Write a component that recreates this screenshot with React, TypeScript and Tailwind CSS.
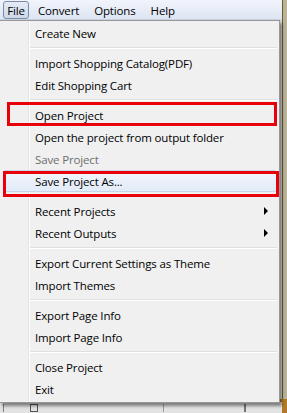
import React from "react";

type Item =
  | { kind: "item"; label: string; disabled?: boolean; sub?: boolean; hover?: boolean }
  | { kind: "sep" };

const items: Item[] = [
  { kind: "item", label: "Create New" },
  { kind: "sep" },
  { kind: "item", label: "Import Shopping Catalog(PDF)" },
  { kind: "item", label: "Edit Shopping Cart" },
  { kind: "sep" },
  { kind: "item", label: "Open Project" },
  { kind: "item", label: "Open the project from output folder" },
  { kind: "item", label: "Save Project", disabled: true },
  { kind: "item", label: "Save Project As...", hover: true },
  { kind: "sep" },
  { kind: "item", label: "Recent Projects", sub: true },
  { kind: "item", label: "Recent Outputs", sub: true },
  { kind: "sep" },
  { kind: "item", label: "Export Current Settings as Theme" },
  { kind: "item", label: "Import Themes" },
  { kind: "sep" },
  { kind: "item", label: "Export Page Info" },
  { kind: "item", label: "Import Page Info" },
  { kind: "sep" },
  { kind: "item", label: "Close Project" },
  { kind: "item", label: "Exit" },
];

export default function App() {
  return (
    <div
      className="relative w-[287px] h-[413px] overflow-hidden bg-[#d9d9d9] text-[11.5px] tracking-[-0.15px] text-black"
      style={{ fontFamily: '"Open Sans", "Noto Sans", sans-serif' }}
    >
      {/* window edge on the right */}
      <div className="absolute top-0 right-0 w-[5px] h-full bg-[#b9b39a]" />
      <div className="absolute top-0 right-[4px] w-[1px] h-full bg-[#6a5a2c]" />
      <div className="absolute bottom-0 right-0 w-[10px] h-[14px] bg-[#b07a2a]" />

      {/* menu bar */}
      <div className="flex items-center h-[20px] w-[282px] bg-gradient-to-b from-[#f1f4fb] to-[#dde5f3] border-b border-[#c9d3e3]">
        <div className="ml-[3px] h-[18px] w-[26px] flex items-center justify-center rounded-[3px] border border-[#7b8ca8] bg-gradient-to-b from-[#e6ecf6] to-[#cdd7e8]">
          <span className="translate-y-[0.5px]">File</span>
        </div>
        <div className="ml-[9px] translate-y-[0.5px]">Convert</div>
        <div className="ml-[15px] translate-y-[0.5px]">Options</div>
        <div className="ml-[15px] translate-y-[0.5px]">Help</div>
      </div>

      {/* bottom window contents peeking */}
      <div className="absolute left-0 top-[402px] w-[282px] h-[11px] bg-[#e3e3e3] flex items-center">
        <div className="ml-[3px] w-[1px] h-[8px] bg-[#808080]" />
        <div className="ml-[26px] w-[8px] h-[8px] border border-[#555]" />
        <div className="ml-[125px] w-[1px] h-[8px] bg-[#9a9a9a]" />
        <div className="ml-[80px] w-[2px] h-[8px] bg-[#777]" />
      </div>

      {/* dropdown */}
      <div className="absolute left-0 top-[20px] w-[280px] h-[383px] bg-[#f0f0f0] border border-[#979797] border-l-0 shadow-[2px_3px_3px_rgba(0,0,0,0.45)] pt-[1px]">
        {/* gutter */}
        <div className="absolute left-[28px] top-[1px] bottom-[1px] w-[1px] bg-[#e2e3e3]" />
        <div className="absolute left-[29px] top-[1px] bottom-[1px] w-[1px] bg-white" />
        <div className="relative flex flex-col">
          {items.map((it, i) =>
            it.kind === "sep" ? (
              <div key={i} className="h-[8px] flex flex-col justify-center pl-[30px] pr-[2px]">
                <div className="h-[1px] bg-[#e0e0e0]" />
                <div className="h-[1px] bg-white" />
              </div>
            ) : (
              <div key={i} className="relative h-[22px] flex items-center">
                {it.hover && (
                  <div className="absolute left-[3px] right-[2px] top-0 bottom-0 rounded-[3px] border border-[#c5d6ec] bg-gradient-to-b from-[#f2f6fc] to-[#e2ebf8]" />
                )}
                <span
                  className={
                    "relative pl-[35px] whitespace-nowrap translate-y-[1px] " +
                    (it.disabled ? "text-[#6d6d6d]" : "text-black")
                  }
                >
                  {it.label}
                </span>
                {it.sub && (
                  <svg className="absolute left-[264px] top-[7px]" width="4" height="8" viewBox="0 0 4 8">
                    <path d="M0 0 L4 4 L0 8 Z" fill="#000" />
                  </svg>
                )}
              </div>
            )
          )}
        </div>
      </div>

      {/* annotation boxes */}
      <div className="absolute left-[7px] top-[102px] w-[270px] h-[24px] border-[3px] border-[#e8000b]" />
      <div className="absolute left-[3px] top-[171px] w-[276px] h-[26px] border-[3px] border-[#e8000b]" />
    </div>
  );
}
